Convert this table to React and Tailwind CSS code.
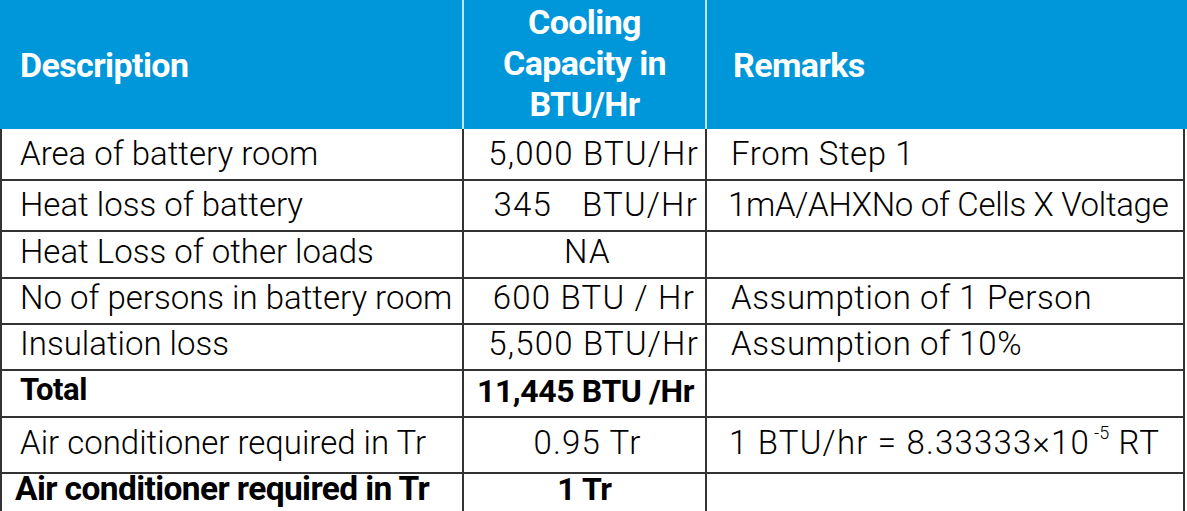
import React from "react";

const rows = [
  { d: "Area of battery room", c: "5,000 BTU/Hr", r: "From Step 1", h: "h-[51px]", cAlign: "justify-end pr-[6px]", rTrack: "tracking-[0.6px]" },
  { d: "Heat loss of battery", c: "345", c2: "BTU/Hr", r: "1mA/AHXNo of Cells X Voltage", h: "h-[47px]", cAlign: "justify-end pr-[7px]", rPad: "pl-[21px]", rTrack: "tracking-[-0.3px]" },
  { d: "Heat Loss of other loads", c: "NA", r: "", h: "h-[46px]", cAlign: "justify-center pl-[6px]" },
  { d: "No of persons in battery room", c: "600 BTU / Hr", r: "Assumption of 1 Person", h: "h-[46px]", cAlign: "justify-end pr-[10px]", rTrack: "tracking-[0.6px]" },
  { d: "Insulation loss", c: "5,500 BTU/Hr", r: "Assumption of 10%", h: "h-[46px]", cAlign: "justify-end pr-[6px]", rTrack: "tracking-[0.6px]" },
  { d: "Total", c: "11,445 BTU /Hr", r: "", h: "h-[53px]", bold: true, cAlign: "justify-center pl-[2px]" },
  { d: "Air conditioner required in Tr", c: "0.95 Tr", r: "sup", h: "h-[46px]", lift: true, cAlign: "justify-center pl-[6px]", rPad: "pl-[22px]", rTrack: "tracking-[1.2px]" },
  { d: "Air conditioner required in Tr", c: "1 Tr", r: "", h: "h-[47px]", bold: true, big: true, dPad: "pl-[13px]", cAlign: "justify-center" },
];

const Remark = ({ r }) => {
  if (r === "sup") {
    return (
      <span>
        1 BTU/hr = 8.33333×10
        <span className="inline-block align-top text-[18px] leading-none ml-[4px] mt-[6px] tracking-normal">-5</span> RT
      </span>
    );
  }
  return <span>{r}</span>;
};

export default function App() {
  return (
    <div className="w-[1187px] h-[511px] bg-white font-['Roboto',sans-serif] text-black overflow-hidden">
      <div className="grid grid-cols-[462px_243px_480px] h-[129px] bg-[#0096da] text-white font-bold">
        <div className="flex items-center pl-[20px] pt-[2px] text-[34px] tracking-[-0.6px]">Description</div>
        <div className="flex flex-col items-center justify-center border-l-2 border-[#bfe4f6] text-[34px] leading-[41px] tracking-[-0.6px] text-center pb-[2px]">
          <span>Cooling</span>
          <span>Capacity in</span>
          <span>BTU/Hr</span>
        </div>
        <div className="flex items-center pl-[26px] pt-[2px] border-l-2 border-r-2 border-l-[#bfe4f6] border-r-[#0096da] text-[34px] tracking-[-0.6px]">Remarks</div>
      </div>

      {rows.map((row, i) => (
        <div key={i} className={`grid grid-cols-[462px_243px_480px] ${row.h} ${row.lift ? "[&>div]:pb-[4px]" : ""}`}>
          <div
            className={`flex items-center border-l-2 border-b-2 border-[#333] ${row.dPad || "pl-[18px]"} ${
              row.bold ? (row.big ? "font-bold text-[33.5px] tracking-[-0.6px]" : "font-bold text-[31px] tracking-[-0.5px]") : "font-light text-[33px]"
            }`}
          >
            {row.d}
          </div>
          <div
            className={`flex items-center whitespace-pre border-l-2 border-b-2 border-[#333] ${row.cAlign} ${
              row.bold ? "font-bold text-[32px] tracking-[-0.4px]" : "font-light text-[33px] tracking-[1.2px]"
            }`}
          >
            {row.c}
            {row.c2 && <span className="ml-[30px]">{row.c2}</span>}
          </div>
          <div className={`flex items-center border-l-2 border-r-2 border-b-2 border-[#333] font-light text-[33px] ${row.rPad || "pl-[24px]"} ${row.rTrack || ""}`}>
            <Remark r={row.r} />
          </div>
        </div>
      ))}
    </div>
  );
}
